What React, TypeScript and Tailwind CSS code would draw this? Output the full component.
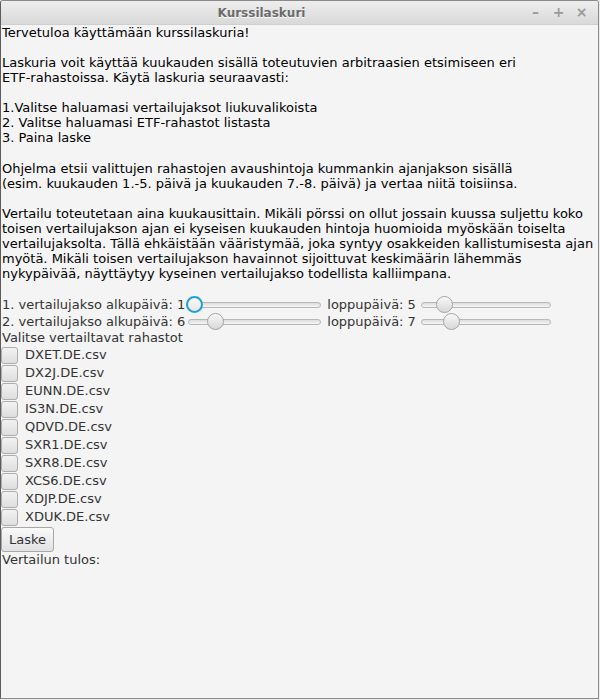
import React from "react";

const intro = `Tervetuloa käyttämään kurssilaskuria!

Laskuria voit käyttää kuukauden sisällä toteutuvien arbitraasien etsimiseen eri
ETF-rahastoissa. Käytä laskuria seuraavasti:

1.Valitse haluamasi vertailujaksot liukuvalikoista
2. Valitse haluamasi ETF-rahastot listasta
3. Paina laske

Ohjelma etsii valittujen rahastojen avaushintoja kummankin ajanjakson sisällä
(esim. kuukauden 1.-5. päivä ja kuukauden 7.-8. päivä) ja vertaa niitä toisiinsa.

Vertailu toteutetaan aina kuukausittain. Mikäli pörssi on ollut jossain kuussa suljettu koko
toisen vertailujakson ajan ei kyseisen kuukauden hintoja huomioida myöskään toiselta
vertailujaksolta. Tällä ehkäistään vääristymää, joka syntyy osakkeiden kallistumisesta ajan
myötä. Mikäli toisen vertailujakson havainnot sijoittuvat keskimäärin lähemmäs
nykypäivää, näyttäytyy kyseinen vertailujakso todellista kalliimpana.
`;

const funds = [
  "DXET.DE.csv",
  "DX2J.DE.csv",
  "EUNN.DE.csv",
  "IS3N.DE.csv",
  "QDVD.DE.csv",
  "SXR1.DE.csv",
  "SXR8.DE.csv",
  "XCS6.DE.csv",
  "XDJP.DE.csv",
  "XDUK.DE.csv",
];

function Slider({ value, width, focused }: { value: number; width: number; focused?: boolean }) {
  const pos = ((value - 1) / 30) * (width - 16);
  return (
    <div className="relative h-[17px] flex items-center shrink-0" style={{ width }}>
      <div className="h-[6px] w-full rounded-full border border-[#b8b8b8] bg-gradient-to-b from-[#dcdcdc] to-[#f6f6f6]" />
      {focused ? (
        <div
          className="absolute top-[0px] w-[17px] h-[17px] rounded-full border-2 border-[#1ea1d6] bg-gradient-to-b from-[#fafafa] to-[#e6e6e6]"
          style={{ left: pos - 0.5 }}
        />
      ) : (
        <div
          className="absolute top-[0px] w-[17px] h-[17px] rounded-full border border-[#a4a4a4] bg-gradient-to-b from-[#f8f8f8] to-[#d8d8d8]"
          style={{ left: pos - 0.5 }}
        />
      )}
    </div>
  );
}

export default function App() {
  return (
    <div className="w-[600px] h-[700px] bg-[#ececec]" style={{ fontFamily: "'DejaVu Sans', sans-serif" }}>
      <div className="w-[599px] h-[699px] flex flex-col border border-[#8a8a8a] border-l-[#5c5c5c] rounded-t-[3px] overflow-hidden bg-[#f4f4f4]">
        <div className="h-[24px] shrink-0 flex items-center bg-gradient-to-b from-[#eeeeee] to-[#d9d9d9] border-b border-[#cfcfcf]">
          <div className="w-[521px] text-center text-[12px] font-bold text-[#6b6b6b] [text-shadow:0_1px_0_#ffffff]">
            Kurssilaskuri
          </div>
          <div className="flex items-center text-[#9a9a9a] font-bold text-[14px]">
            <span className="w-[23px] text-center ml-[2px]">–</span>
            <span className="w-[23px] text-center">+</span>
            <span className="w-[23px] text-center">×</span>
          </div>
        </div>
        <div className="flex flex-col items-start pl-0">
          <div className="whitespace-pre text-[13px] leading-[15.06px] text-black pl-[1px]">{intro}{"\n"}</div>
          <div className="flex items-center h-[17px] text-[13px] text-[#333333] pl-[1px]">
            <span>1. vertailujakso alkupäivä: 1</span>
            <div className="ml-[1px]">
              <Slider value={1} width={135} focused />
            </div>
            <span className="ml-[6px]">loppupäivä: 5</span>
            <div className="ml-[5px]">
              <Slider value={5} width={130} />
            </div>
          </div>
          <div className="flex items-center h-[17px] text-[13px] text-[#333333] pl-[1px]">
            <span>2. vertailujakso alkupäivä: 6</span>
            <div className="ml-[3px]">
              <Slider value={6} width={133} />
            </div>
            <span className="ml-[6px]">loppupäivä: 7</span>
            <div className="ml-[5px]">
              <Slider value={7} width={130} />
            </div>
          </div>
          <div className="h-[16px] text-[13px] leading-[15px] text-[#333333] pl-[1px]">Valitse vertailtavat rahastot</div>
          <div className="flex flex-col">
            {funds.map((f) => (
              <div key={f} className="flex items-center h-[18px] text-[13px] text-[#333333]">
                <div className="w-[17px] h-[17px] rounded-[3px] border border-[#adadad] bg-gradient-to-b from-[#f2f2f2] to-[#dedede]" />
                <span className="ml-[7px]">{f}</span>
              </div>
            ))}
          </div>
          <button className="mt-[1px] h-[25px] px-[7px] rounded-[3px] border border-[#a8a8a8] bg-gradient-to-b from-[#f9f9f9] to-[#e2e2e2] text-[13px] text-[#333333] leading-none">
            Laske
          </button>
          <div className="h-[15px] text-[13px] leading-[15px] text-[#333333] pl-[1px]">Vertailun tulos:</div>
        </div>
      </div>
    </div>
  );
}
